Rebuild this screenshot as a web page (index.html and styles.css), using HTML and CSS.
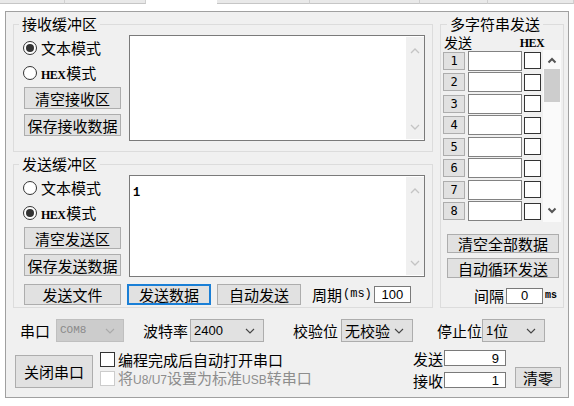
FILE: index.html
```html
<!DOCTYPE html>
<html lang="zh-CN">
<head>
<meta charset="utf-8">
<title>串口助手</title>
<link rel="stylesheet" href="styles.css">
</head>
<body>
<div class="tabs">
  <span class="tab w65"></span><span class="tab w81"></span><span class="tabgap"></span><span class="tab w93"></span><span class="tab w110"></span><span class="tab w68"></span><span class="tab w86"></span>
</div>
<div class="window">
  <div class="top">
    <div class="leftcol">
      <fieldset class="group recv">
        <legend>接收缓冲区</legend>
        <div class="gbody">
          <div class="ctrls">
            <div class="radio"><span class="rb on"></span><span class="rtxt">文本模式</span></div>
            <div class="radio"><span class="rb"></span><span class="rtxt"><span class="hex">HEX</span>模式</span></div>
            <button class="btn cbtn first">清空接收区</button>
            <button class="btn cbtn second">保存接收数据</button>
          </div>
          <div class="tbox recvbox">
            <div class="tarea"></div>
            <div class="vsb">
              <svg width="10" height="6" viewBox="0 0 10 6"><path d="M1 5 L5 1 L9 5" fill="none" stroke="#c4c4c4" stroke-width="1.3"/></svg>
              <svg width="10" height="6" viewBox="0 0 10 6"><path d="M1 1 L5 5 L9 1" fill="none" stroke="#c4c4c4" stroke-width="1.3"/></svg>
            </div>
          </div>
        </div>
      </fieldset>
      <fieldset class="group send">
        <legend>发送缓冲区</legend>
        <div class="gbody col">
          <div class="srow">
            <div class="ctrls">
              <div class="radio"><span class="rb"></span><span class="rtxt">文本模式</span></div>
              <div class="radio"><span class="rb on"></span><span class="rtxt"><span class="hex">HEX</span>模式</span></div>
              <button class="btn cbtn first">清空发送区</button>
              <button class="btn cbtn second">保存发送数据</button>
            </div>
            <div class="tbox sendbox">
              <div class="tarea"><span class="mono">1</span></div>
              <div class="vsb">
                <svg width="10" height="6" viewBox="0 0 10 6"><path d="M1 5 L5 1 L9 5" fill="none" stroke="#c4c4c4" stroke-width="1.3"/></svg>
                <svg width="10" height="6" viewBox="0 0 10 6"><path d="M1 1 L5 5 L9 1" fill="none" stroke="#c4c4c4" stroke-width="1.3"/></svg>
              </div>
            </div>
          </div>
          <div class="brow">
            <button class="btn b97">发送文件</button>
            <button class="btn b84 focus">发送数据</button>
            <button class="btn b84">自动发送</button>
            <span class="period"><span>周期</span><span class="ms">(ms)</span></span>
            <span class="field f37">100</span>
          </div>
        </div>
      </fieldset>
    </div>
    <fieldset class="group multi">
      <legend>多字符串发送</legend>
      <div class="mbody">
        <div class="mhead"><span>发送</span><span class="hexh">HEX</span></div>
        <div class="mlist">
          <div class="mrows">
            <div class="mrow"><button class="nbtn">1</button><span class="minp"></span><span class="cb"></span></div>
            <div class="mrow"><button class="nbtn">2</button><span class="minp"></span><span class="cb"></span></div>
            <div class="mrow"><button class="nbtn">3</button><span class="minp"></span><span class="cb"></span></div>
            <div class="mrow"><button class="nbtn">4</button><span class="minp"></span><span class="cb"></span></div>
            <div class="mrow"><button class="nbtn">5</button><span class="minp"></span><span class="cb"></span></div>
            <div class="mrow"><button class="nbtn">6</button><span class="minp"></span><span class="cb"></span></div>
            <div class="mrow"><button class="nbtn">7</button><span class="minp"></span><span class="cb"></span></div>
            <div class="mrow"><button class="nbtn">8</button><span class="minp"></span><span class="cb"></span></div>
          </div>
          <div class="msb">
            <svg width="10" height="7" viewBox="0 0 10 7"><path d="M1.5 5.5 L5 2 L8.5 5.5" fill="none" stroke="#555" stroke-width="2"/></svg>
            <div class="thumb"></div>
            <div class="spacer"></div>
            <svg width="10" height="7" viewBox="0 0 10 7"><path d="M1.5 1.5 L5 5 L8.5 1.5" fill="none" stroke="#555" stroke-width="2"/></svg>
          </div>
        </div>
        <button class="btn wide clr">清空全部数据</button>
        <button class="btn wide loop">自动循环发送</button>
        <div class="gaprow"><span>间隔</span><span class="field f37 g0">0</span><span class="ms2">ms</span></div>
      </div>
    </fieldset>
  </div>
  <div class="bottom">
    <div class="rowa">
      <span class="lbl">串口</span>
      <div class="select dis s68"><span class="sval com">COM8</span><svg width="10" height="6" viewBox="0 0 10 6"><path d="M1 1 L5 5 L9 1" fill="none" stroke="#a9a9a9" stroke-width="1.1"/></svg></div>
      <span class="lbl m19">波特率</span>
      <div class="select s74"><span class="sval num">2400</span><svg width="10" height="6" viewBox="0 0 10 6"><path d="M1 1 L5 5 L9 1" fill="none" stroke="#444" stroke-width="1.1"/></svg></div>
      <span class="lbl m29">校验位</span>
      <div class="select s72"><span class="sval">无校验</span><svg width="10" height="6" viewBox="0 0 10 6"><path d="M1 1 L5 5 L9 1" fill="none" stroke="#444" stroke-width="1.1"/></svg></div>
      <span class="lbl m24">停止位</span>
      <div class="select s63 tight"><span class="sval"><span class="num">1</span>位</span><svg width="10" height="6" viewBox="0 0 10 6"><path d="M1 1 L5 5 L9 1" fill="none" stroke="#444" stroke-width="1.1"/></svg></div>
    </div>
    <div class="rowb">
      <button class="btn closebtn">关闭串口</button>
      <div class="checks">
        <div class="crow"><span class="cb sm"></span><span>编程完成后自动打开串口</span></div>
        <div class="crow disabled"><span class="cb sm off"></span><span>将<span class="en">U8/U7</span>设置为标准<span class="en">USB</span>转串口</span></div>
      </div>
      <div class="counters">
        <div class="cnt"><span>发送</span><span class="cval">9</span></div>
        <div class="cnt"><span>接收</span><span class="cval">1</span></div>
      </div>
      <button class="btn zero">清零</button>
    </div>
  </div>
</div>
</body>
</html>
```
FILE: styles.css
```css
*{box-sizing:border-box;}
html,body{margin:0;padding:0;}
body{width:574px;height:406px;overflow:hidden;background:#fff;font-family:"Noto Sans CJK SC","Noto Sans",sans-serif;font-size:15px;line-height:1;color:#000;}

.tabs{display:flex;height:4px;}
.tab{height:4px;background:#e9e9e9;border-right:1px solid #d0d0d0;border-bottom:1px solid #c6c6c6;}
.tabgap{width:71px;}
.w65{width:65px;}.w81{width:81px;}.w93{width:93px;}.w110{width:110px;}.w68{width:68px;}.w86{width:86px;}

.window{margin:7px 0 0 5px;width:564px;height:387px;border:1px solid #a0a0a0;background:#f0f0f0;}
.top{display:flex;gap:7px;padding:3px 0 0 7px;}
.leftcol{width:420px;display:flex;flex-direction:column;gap:3px;}

.group{margin:0;padding:0;border:1px solid #dcdcdc;min-width:0;}
.group legend{margin-left:5px;padding:0 3px;height:18px;line-height:18px;font-size:15px;}
.gbody{display:flex;padding:2px 7px 10px 10px;}
.gbody.col{flex-direction:column;padding-bottom:2px;}
.srow{display:flex;}

.ctrls{width:97px;margin-right:8px;display:flex;flex-direction:column;}
.radio{height:25px;display:flex;align-items:center;margin-left:-1px;}
.rb{width:14px;height:14px;border:1px solid #333;border-radius:50%;background:#fff;display:flex;align-items:center;justify-content:center;flex:none;}
.rb.on::after{content:"";width:8px;height:8px;border-radius:50%;background:#333;}
.rtxt{margin-left:4px;}
.hex{font-family:"Liberation Serif",serif;font-weight:bold;font-size:12px;letter-spacing:-0.6px;margin-right:1px;}

.btn{font-family:inherit;font-size:15px;line-height:1;color:#000;background:#e1e1e1;border:1px solid #adadad;padding:0;margin:0;display:flex;align-items:center;justify-content:center;border-radius:0;}
.cbtn{width:97px;height:22px;}
.cbtn.first{margin-top:2px;}
.cbtn.second{margin-top:5px;}

.tbox{width:296px;border:1px solid #7a7a7a;background:#fff;display:flex;}
.recvbox{height:106px;}
.sendbox{height:102px;}
.tarea{flex:1;padding:6px 0 0 3px;}
.mono{font-family:"Liberation Mono",monospace;font-size:12px;font-weight:bold;}
.vsb{width:18px;background:#f0f0f0;display:flex;flex-direction:column;justify-content:space-between;align-items:center;padding:11px 0 9px;margin:1px 0;}

.brow{display:flex;align-items:center;margin-top:6px;height:22px;}
.b97{width:97px;height:21px;}
.b84{width:84px;height:21px;margin-left:6px;}
.focus{border:2px solid #1a7fd6;}
.period{margin-left:11px;display:flex;align-items:center;height:17px;}
.ms{font-family:"Liberation Mono",monospace;font-size:12px;margin-left:1px;line-height:17px;}
.field{background:#fff;border:1px solid #7a7a7a;display:flex;align-items:center;justify-content:center;font-family:"Liberation Sans",sans-serif;font-size:13px;}
.f37{width:37px;height:17px;margin-left:2px;}

.multi{width:124px;}
.multi legend{margin-left:6px;}
.mbody{display:flex;flex-direction:column;padding:0 1px 0 2px;}
.mhead{height:17px;display:flex;align-items:flex-end;justify-content:space-between;padding:0 18px 1px 1px;font-size:14px;}
.hexh{font-family:"Liberation Serif",serif;font-weight:bold;font-size:12px;letter-spacing:-0.6px;}
.mlist{display:flex;height:172px;}
.mrows{width:98px;display:flex;flex-direction:column;}
.mrow{height:21.5px;display:flex;align-items:center;}
.nbtn{width:22px;height:18px;background:#e1e1e1;border:1px solid #adadad;padding:0;margin:0;font-family:"DejaVu Sans Mono",monospace;font-size:12px;color:#000;display:flex;align-items:center;justify-content:center;}
.minp{width:54px;height:20px;margin-left:3px;background:#fff;border:1px solid #828282;}
.cb{width:17px;height:17px;margin-left:2px;background:#fff;border:1px solid #333;flex:none;}
.msb{width:18px;margin-left:2px;background:#fafafa;display:flex;flex-direction:column;align-items:center;padding:7px 0 8px;}
.thumb{width:16px;height:33px;background:#cdcdcd;margin-top:5px;}
.spacer{flex:1;}
.wide{width:112px;margin-left:4px;}
.clr{height:19px;margin-top:12px;}
.loop{height:20px;margin-top:5px;}
.gaprow{display:flex;align-items:center;height:17px;margin-top:9px;padding-left:31px;}
.g0{height:16px;margin-left:2px;}
.ms2{font-family:"Liberation Mono",monospace;font-size:10px;font-weight:bold;margin-left:2px;}

.bottom{display:flex;flex-direction:column;}
.rowa{display:flex;align-items:center;height:23px;margin-top:11px;padding-left:14px;}
.lbl{white-space:nowrap;}
.m19{margin-left:19px;}.m29{margin-left:29px;}.m24{margin-left:24px;}
.select{height:23px;display:flex;align-items:center;justify-content:space-between;background:#e1e1e1;border:1px solid #adadad;padding:0 8px 0 3px;margin-left:2px;}
.select.dis{background:#cccccc;border-color:#bfbfbf;color:#8a8a8a;margin-left:6px;}
.s68{width:68px;}.s74{width:74px;}.s72{width:72px;margin-left:3px;}.s63{width:63px;}
.tight{margin-left:0;}
.sval{display:flex;align-items:center;}
.com{font-family:"Liberation Mono",monospace;font-size:11px;}
.num{font-family:"Liberation Sans",sans-serif;font-size:13px;}

.rowb{display:flex;align-items:flex-start;margin-top:8px;padding-right:7px;}
.closebtn{width:78px;height:33px;margin:5px 0 0 9px;}
.checks{margin-left:7px;display:flex;flex-direction:column;}
.crow{height:19px;display:flex;align-items:center;white-space:nowrap;line-height:15px;}
.cb.sm{width:15px;height:15px;margin:0 3px 0 0;}
.cb.off{border-color:#cccccc;}
.disabled{color:#8d8d8d;}
.en{font-family:"Liberation Sans",sans-serif;font-size:12px;line-height:15px;}
.counters{margin-left:auto;display:flex;flex-direction:column;gap:6px;}
.cnt{height:16px;display:flex;align-items:center;}
.cval{width:62px;height:16px;margin-left:1px;background:#fff;border:1px solid #7a7a7a;display:flex;align-items:center;justify-content:flex-end;padding-right:6px;font-family:"Liberation Sans",sans-serif;font-size:13px;}
.zero{width:46px;height:21px;margin:17px 0 0 9px;}
```
